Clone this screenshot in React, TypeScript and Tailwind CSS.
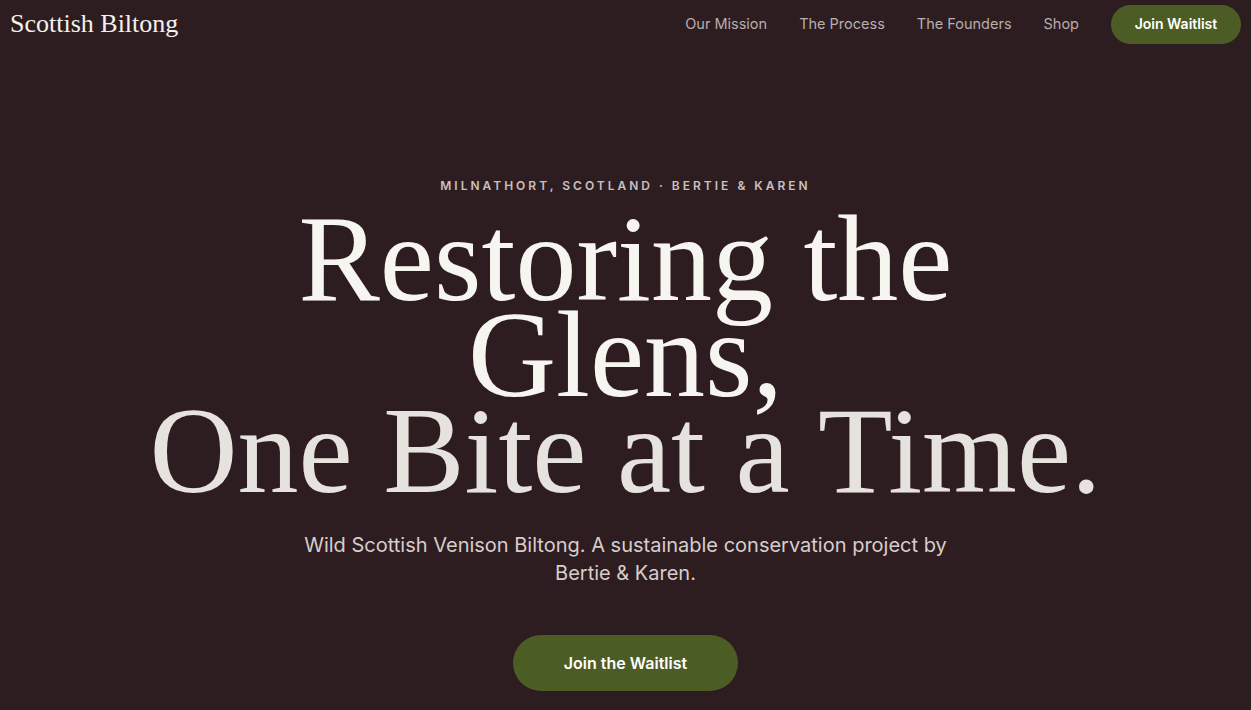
export default function App() {
  const serif = { fontFamily: '"Liberation Serif", "Times New Roman", serif' };
  return (
    <div
      className="min-h-[710px] w-full bg-[#2e1d20] text-white"
      style={{ fontFamily: 'Inter, "Liberation Sans", sans-serif' }}
    >
      <header className="flex h-12 items-center justify-between px-[10px]">
        <a href="#" className="text-[26px] leading-none text-[#f4f1ec]" style={serif}>
          Scottish Biltong
        </a>
        <nav className="flex items-center gap-8">
          <a href="#" className="text-[14.5px] text-[#b7aeaf]">Our Mission</a>
          <a href="#" className="text-[14.5px] text-[#b7aeaf]">The Process</a>
          <a href="#" className="text-[14.5px] text-[#b7aeaf]">The Founders</a>
          <a href="#" className="text-[14.5px] text-[#b7aeaf]">Shop</a>
          <button className="h-[39px] w-[130px] rounded-full bg-[#4b5d24] text-sm font-semibold text-white">
            Join Waitlist
          </button>
        </nav>
      </header>

      <main className="flex flex-col items-center px-6 pt-[130px] text-center">
        <p className="text-xs leading-4 font-semibold tracking-[0.25em] text-[#c9c0c1]">
          MILNATHORT, SCOTLAND · BERTIE &amp; KAREN
        </p>
        <h1
          className="mt-[17px] text-[122px] leading-[96px] font-normal text-[#f7f5f0]"
          style={serif}
        >
          Restoring the
          <br />
          Glens,
          <br />
          <span className="text-[#e6e2dd]">One Bite at a Time.</span>
        </h1>
        <p className="mt-8 max-w-[660px] text-xl leading-7 text-[#d6cecb]">
          Wild Scottish Venison Biltong. A sustainable conservation project by Bertie &amp; Karen.
        </p>
        <button className="mt-12 h-14 w-[225px] rounded-full bg-[#4b5d24] text-base font-semibold text-white">
          Join the Waitlist
        </button>
      </main>
    </div>
  );
}
